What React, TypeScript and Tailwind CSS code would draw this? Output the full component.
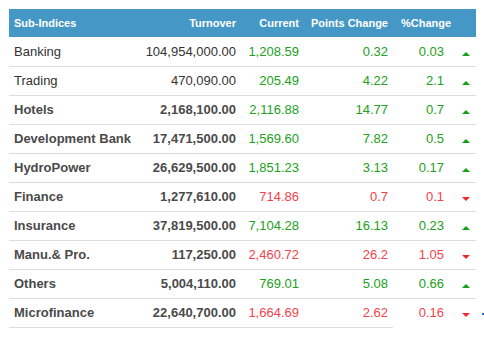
const rows = [
  { name: "Banking", turnover: "104,954,000.00", current: "1,208.59", points: "0.32", pct: "0.03", up: true },
  { name: "Trading", turnover: "470,090.00", current: "205.49", points: "4.22", pct: "2.1", up: true },
  { name: "Hotels", turnover: "2,168,100.00", current: "2,116.88", points: "14.77", pct: "0.7", up: true },
  { name: "Development Bank", turnover: "17,471,500.00", current: "1,569.60", points: "7.82", pct: "0.5", up: true },
  { name: "HydroPower", turnover: "26,629,500.00", current: "1,851.23", points: "3.13", pct: "0.17", up: true },
  { name: "Finance", turnover: "1,277,610.00", current: "714.86", points: "0.7", pct: "0.1", up: false },
  { name: "Insurance", turnover: "37,819,500.00", current: "7,104.28", points: "16.13", pct: "0.23", up: true },
  { name: "Manu.& Pro.", turnover: "117,250.00", current: "2,460.72", points: "26.2", pct: "1.05", up: false },
  { name: "Others", turnover: "5,004,110.00", current: "769.01", points: "5.08", pct: "0.66", up: true },
  { name: "Microfinance", turnover: "22,640,700.00", current: "1,664.69", points: "2.62", pct: "0.16", up: false },
];

function Arrow({ up }: { up: boolean }) {
  return up ? (
    <span className="mt-[2px] inline-block h-0 w-0 border-x-4 border-b-4 border-x-transparent border-b-[#14a014]" />
  ) : (
    <span className="mt-[3px] inline-block h-0 w-0 border-x-4 border-t-4 border-x-transparent border-t-[#f0282d]" />
  );
}

export default function App() {
  return (
    <div className="relative h-[337px] w-[484px] overflow-hidden bg-white pl-[9px] pt-[9px] font-['Liberation_Sans',Arial,sans-serif]">
      <table className="w-[467px] table-fixed border-collapse">
        <colgroup>
          <col className="w-[121px]" />
          <col className="w-[111px]" />
          <col className="w-[63px]" />
          <col className="w-[89px]" />
          <col className="w-[56px]" />
          <col className="w-[27px]" />
        </colgroup>
        <thead>
          <tr className="h-[28px] bg-[#4597c5] text-[11px] font-bold text-white">
            <th className="px-[5px] text-left">Sub-Indices</th>
            <th className="pr-[5px] text-right">Turnover</th>
            <th className="pr-[5px] text-right">Current</th>
            <th className="pr-[5px] text-right">Points Change</th>
            <th colSpan={2} className="pl-[8px] text-left">%Change</th>
          </tr>
        </thead>
        <tbody className="text-[13px]">
          {rows.map((r, i) => {
            const last = i === rows.length - 1;
            const tone = r.up ? "text-[#21a021]" : "text-[#f2434c]";
            // the first two rows render lighter than the rest in the source
            const dark = i < 2 ? "text-[#333]" : "font-bold text-[#4a4a4a]";
            return (
              <tr key={r.name} className="h-[29px]">
                <td className={`border-b border-[#dcdcdc] px-[5px] text-left whitespace-nowrap ${dark}`}>{r.name}</td>
                <td className={`border-b border-[#dcdcdc] pr-[5px] text-right ${dark}`}>{r.turnover}</td>
                <td className={`border-b border-[#dcdcdc] pr-[5px] text-right ${tone}`}>{r.current}</td>
                <td className={`border-b border-[#dcdcdc] pr-[5px] text-right ${tone}`}>{r.points}</td>
                <td className={`${last ? "" : "border-b border-[#dcdcdc]"} pr-[5px] text-right ${tone}`}>{r.pct}</td>
                <td className={`${last ? "" : "border-b border-[#dcdcdc]"} pl-[13px] text-left`}>
                  <Arrow up={r.up} />
                </td>
              </tr>
            );
          })}
        </tbody>
      </table>
      <span className="absolute left-[482px] top-[313px] h-[2px] w-[2px] bg-[#3b5bdb]" />
    </div>
  );
}
